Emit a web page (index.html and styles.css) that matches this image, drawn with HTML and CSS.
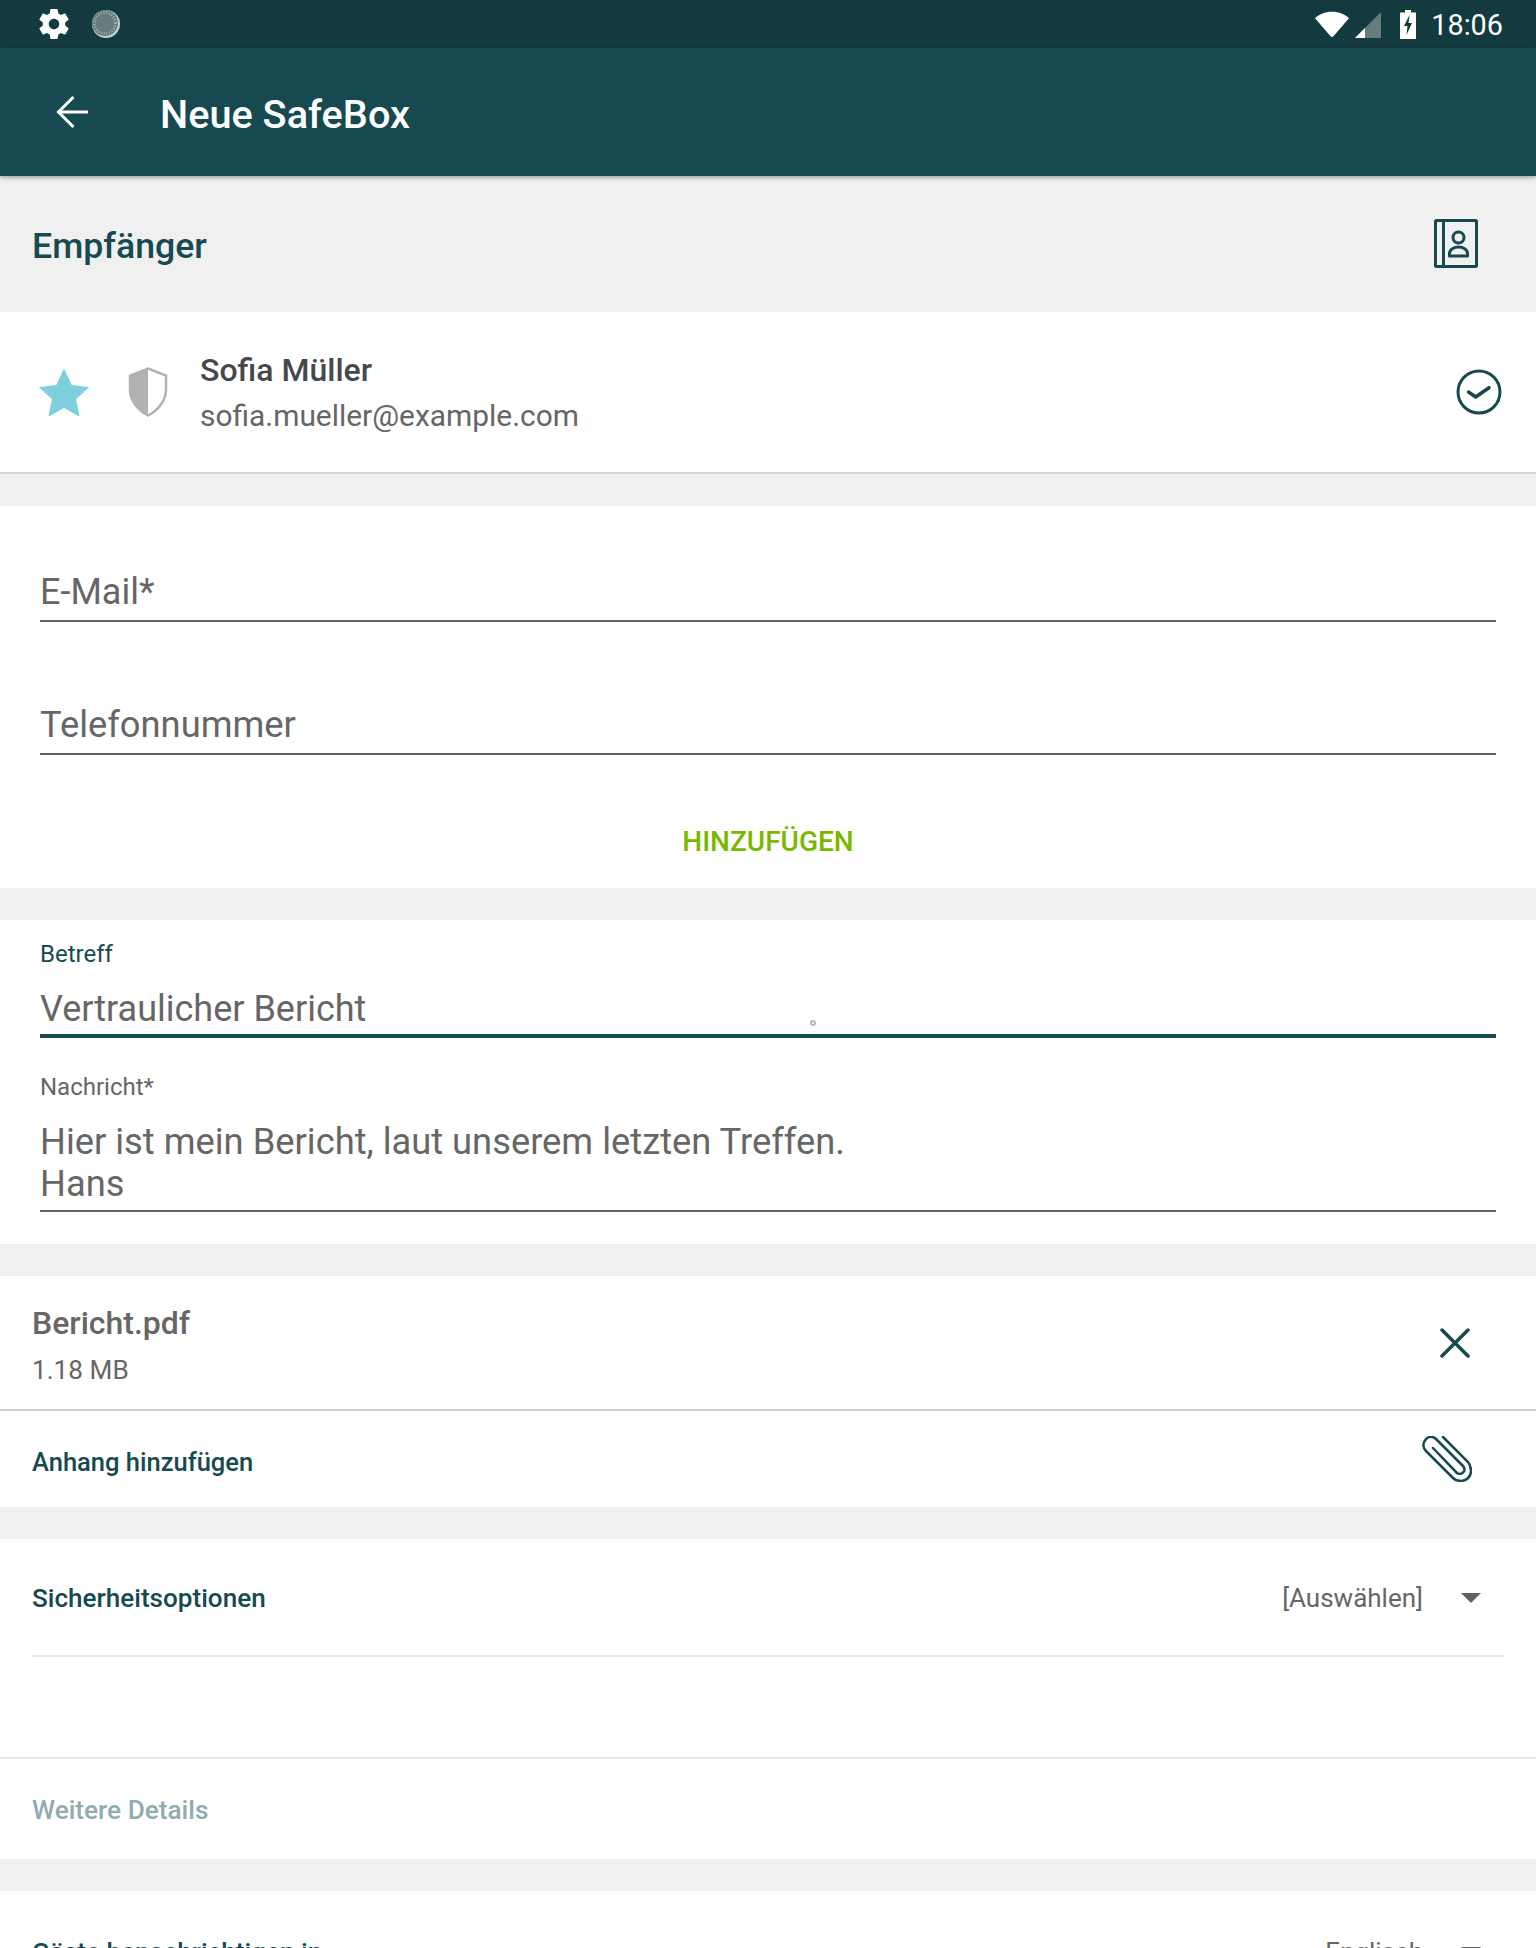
FILE: index.html
```html
<!DOCTYPE html>
<html lang="de">
<head>
    <meta charset="UTF-8">
    <meta name="viewport" content="width=device-width, initial-scale=1.0">
    <title>Neue SafeBox</title>
    <link rel="stylesheet" href="styles.css">
</head>
<body>
    <div class="status-bar">
        <svg class="icon-gear" viewBox="0 0 24 24"><path fill="#fff" d="M19.43 12.98c.04-.32.07-.64.07-.98s-.03-.66-.07-.98l2.11-1.65c.19-.15.24-.42.12-.64l-2-3.46c-.12-.22-.39-.3-.61-.22l-2.49 1c-.52-.4-1.08-.73-1.69-.98l-.38-2.65C14.46 2.18 14.25 2 14 2h-4c-.25 0-.46.18-.49.42l-.38 2.65c-.61.25-1.17.59-1.69.98l-2.49-1c-.23-.09-.49 0-.61.22l-2 3.46c-.13.22-.07.49.12.64l2.11 1.65c-.04.32-.07.65-.07.98s.03.66.07.98l-2.11 1.65c-.19.15-.24.42-.12.64l2 3.46c.12.22.39.3.61.22l2.49-1c.52.4 1.08.73 1.69.98l.38 2.65c.03.24.24.42.49.42h4c.25 0 .46-.18.49-.42l.38-2.65c.61-.25 1.17-.59 1.69-.98l2.49 1c.23.09.49 0 .61-.22l2-3.46c.12-.22.07-.49-.12-.64l-2.11-1.65zM12 15.5c-1.93 0-3.5-1.57-3.5-3.5s1.57-3.5 3.5-3.5 3.5 1.57 3.5 3.5-1.57 3.5-3.5 3.5z"/></svg>
        <svg class="icon-dial" viewBox="0 0 28 28">
            <circle cx="14" cy="14" r="14" fill="#c3d3d2"/>
            <circle cx="13" cy="13" r="13" fill="#667c7e"/>
            <circle cx="13" cy="13" r="10.5" fill="none" stroke="#a9b8b9" stroke-width="2.5" stroke-dasharray="1 1.8"/>
        </svg>
        <div class="status-right">
            <svg class="icon-wifi" viewBox="0 0 36 28"><path fill="#fff" d="M0 7.5C4.5 3 10.5 0.500 18 0.500S31.500 3 36 7.500L19.500 26.500c-.8.9-2.200.9-3 0z"/></svg>
            <svg class="icon-signal" viewBox="0 0 26 26">
                <path fill="#667c7e" d="M26 0v26H0z"/>
                <path fill="#fff" d="M10 16v10H0z"/>
            </svg>
            <svg class="icon-battery" viewBox="0 0 16 29"><path fill="#fff" d="M5 0h6v2.500h5V29H0V2.500h5z"/><path fill="#123a3f" d="M9.500 5 4 16h3.500l-1 9L12 13H8.500z"/></svg>
            <span class="clock">18:06</span>
        </div>
    </div>

    <header class="app-bar">
        <svg class="icon-back" viewBox="0 0 32 32"><path fill="none" stroke="#fff" stroke-width="3" d="M32 16H3M17.500 1 2.500 16l15 15"/></svg>
        <h1>Neue SafeBox</h1>
    </header>

    <div class="recipients-head">
        <h2>Empfänger</h2>
        <svg class="icon-contacts" viewBox="0 0 44 50" fill="none" stroke="#174a50" stroke-width="3">
            <rect x="1.500" y="1.500" width="41" height="46" rx="1"/>
            <path d="M9.500 1.500v46"/>
            <circle cx="24.500" cy="18.500" r="5.500"/>
            <path d="M15.500 37v-2.500c0-4 4.500-6.500 9-6.500s9 2.500 9 6.500V37z" stroke-linejoin="round"/>
        </svg>
    </div>

    <div class="recipient">
        <svg class="icon-star" viewBox="0 0 50 48"><path fill="#7fd0de" d="M25 0.500 32.500 16.500 49.500 18.500 36.500 30 40 47 25 38.500 10 47 13.500 30 0.500 18.500 17.500 16.500z" stroke="#7fd0de" stroke-linejoin="round"/></svg>
        <svg class="icon-shield" viewBox="0 0 40 50">
            <path fill="#fff" stroke="#b2b2b2" stroke-width="2.500" d="M20 1.500 38 8.500v14c0 11-8 21-18 26C10 43.500 2 33.500 2 22.500v-14z"/>
            <path fill="#b2b2b2" d="M20 1.500V48.500C10 43.500 2 33.500 2 22.500v-14z"/>
        </svg>
        <div class="recipient-text">
            <div class="recipient-name">Sofia Müller</div>
            <div class="recipient-mail">sofia.mueller@example.com</div>
        </div>
        <svg class="icon-check" viewBox="0 0 46 46" fill="none" stroke="#174a50" stroke-width="3">
            <circle cx="23" cy="23" r="21"/>
            <path d="M12.500 23l7.200 5 13.300-9.300" stroke-width="3.500" stroke-linecap="round" stroke-linejoin="round"/>
        </svg>
    </div>

    <section class="card add-guest">
        <div class="field field-email">E-Mail*</div>
        <div class="field field-phone">Telefonnummer</div>
        <div class="add-button">HINZUFÜGEN</div>
    </section>

    <section class="card message">
        <div class="field-label">Betreff</div>
        <div class="field field-subject">Vertraulicher Bericht<span class="cursor-dot"></span></div>
        <div class="field-label label-message">Nachricht*</div>
        <div class="field field-message">Hier ist mein Bericht, laut unserem letzten Treffen.<br>Hans</div>
    </section>

    <section class="card attachments">
        <div class="attachment">
            <div class="attachment-text">
                <div class="attachment-name">Bericht.pdf</div>
                <div class="attachment-size">1.18 MB</div>
            </div>
            <svg class="icon-close" viewBox="0 0 30 30"><path fill="none" stroke="#174a50" stroke-width="3.500" stroke-linecap="round" d="M2 2l26 26M28 2 2 28"/></svg>
        </div>
        <div class="attachment-add">
            <span class="row-title">Anhang hinzufügen</span>
            <svg class="icon-clip" viewBox="0 0 50 46" fill="none" stroke="#174a50" stroke-width="2.500" stroke-linecap="round">
                <path d="M21 1 46 26c2.500 3 3 7 3 9 0 6-5 10-10 10-3 0-6-1-8-3L4 15C1 12 0.500 7.500 3 4.500 6-.5 11 0 14 3l27 27c2 2 2 5 0 6.500-2 2-5 1.500-6.500 0L11 12"/>
            </svg>
        </div>
    </section>

    <section class="card options">
        <div class="select-row">
            <span class="row-title">Sicherheitsoptionen</span>
            <span class="select-value">[Auswählen]</span>
            <span class="caret"></span>
        </div>
        <div class="options-gap"></div>
        <div class="details-row">Weitere Details</div>
    </section>

    <section class="card guests">
        <div class="select-row guests-row">
            <span class="row-title">Gäste benachrichtigen in</span>
            <span class="select-value">Englisch</span>
            <span class="caret"></span>
        </div>
    </section>
</body>
</html>
```

FILE: styles.css
```css
html, body {
    margin: 0;
    height: 1948px;
    overflow: hidden;
}
body {
    display: flex;
    flex-direction: column;
    background-color: #f0f0f0;
    font-family: Roboto, "Noto Sans", sans-serif;
    color: #666;
}
body > * {
    flex-shrink: 0;
}
h1, h2 {
    margin: 0;
}
svg {
    flex-shrink: 0;
    display: block;
}

/* status bar */
.status-bar {
    display: flex;
    align-items: center;
    height: 48px;
    padding: 0 33px 0 39px;
    background-color: #123a3f;
}
.icon-gear {
    width: 36px;
    height: 36px;
    margin-left: -3px;
}
.icon-dial {
    width: 28px;
    height: 28px;
    margin-left: 20px;
}
.status-right {
    display: flex;
    align-items: center;
    margin-left: auto;
}
.icon-wifi {
    width: 34px;
    height: 27px;
}
.icon-signal {
    width: 26px;
    height: 26px;
    margin: 2px 0 0 6px;
}
.icon-battery {
    width: 16px;
    height: 29px;
    margin-left: 19px;
}
.clock {
    margin: 2px 0 0 15px;
    font-size: 28.8px;
    color: #fff;
}

/* app bar */
.app-bar {
    position: relative;
    z-index: 1;
    display: flex;
    align-items: center;
    height: 128px;
    padding-left: 56px;
    background-color: #174a50;
    box-shadow: 0 2px 4px rgba(0, 0, 0, 0.3);
}
.icon-back {
    width: 32px;
    height: 32px;
    margin-bottom: 1px;
}
.app-bar h1 {
    margin: 5px 0 0 72px;
    font-size: 39.7px;
    font-weight: 500;
    color: #fff;
}

/* recipients */
.recipients-head {
    display: flex;
    align-items: center;
    justify-content: space-between;
    height: 136px;
    padding: 0 58px 0 32px;
}
.recipients-head h2 {
    margin-top: 3px;
    font-size: 35.7px;
    font-weight: 500;
    color: #174a50;
}
.icon-contacts {
    width: 44px;
    height: 50px;
}
.recipient {
    display: flex;
    align-items: center;
    height: 160px;
    padding: 0 34px 0 39px;
    border-bottom: 2px solid #d6d6d6;
    background-color: #fff;
}
.icon-star {
    width: 50px;
    height: 48px;
    margin-top: 2px;
}
.icon-shield {
    width: 40px;
    height: 50px;
    margin-left: 39px;
}
.recipient-text {
    margin: 3px 0 0 32px;
    flex-grow: 1;
}
.recipient-name {
    font-size: 32px;
    font-weight: 500;
    line-height: 44px;
    color: #46484c;
}
.recipient-mail {
    font-size: 29.9px;
    line-height: 47px;
}
.icon-check {
    width: 46px;
    height: 46px;
}

/* form cards */
.card {
    display: flex;
    flex-direction: column;
    margin-top: 32px;
    background-color: #fff;
}
.add-guest {
    height: 382px;
}
.message {
    height: 324px;
}
.field {
    margin: 0 40px;
    font-size: 36px;
    line-height: 42px;
    border-bottom: 2px solid #616161;
}
.field-email {
    margin-top: 65px;
    padding-bottom: 7px;
}
.field-phone {
    margin-top: 82px;
    padding-bottom: 7px;
    font-size: 36.3px;
}
.add-button {
    margin-top: 70px;
    font-size: 28px;
    font-weight: 500;
    text-align: center;
    color: #7ab800;
}
.field-label {
    margin: 20px 40px 0;
    font-size: 24px;
    line-height: 28px;
}
.message .field-label:first-child {
    color: #174a50;
}
.field-subject {
    position: relative;
    margin-top: 20px;
    padding-bottom: 4px;
    border-bottom: 4px solid #174a50;
}
.cursor-dot {
    position: absolute;
    left: 770px;
    bottom: 8px;
    width: 6px;
    height: 6px;
    border: 2px solid #b8b8b8;
    border-radius: 50%;
    box-sizing: border-box;
}
.label-message {
    margin-top: 35px;
}
.field-message {
    margin-top: 20px;
    padding-bottom: 5px;
    font-size: 36.3px;
}

/* attachments */
.attachment {
    display: flex;
    align-items: center;
    justify-content: space-between;
    height: 133px;
    padding: 0 66px 0 32px;
    border-bottom: 2px solid #cfcfcf;
}
.attachment-text {
    padding-top: 6px;
}
.attachment-name {
    font-size: 32px;
    font-weight: 500;
    line-height: 46px;
}
.attachment-size {
    margin-top: 2px;
    font-size: 26.2px;
    line-height: 44px;
}
.icon-close {
    width: 30px;
    height: 30px;
}
.attachment-add {
    display: flex;
    align-items: center;
    justify-content: space-between;
    height: 90px;
    padding: 6px 64px 0 32px;
}
.row-title {
    font-size: 26px;
    font-weight: 500;
    color: #174a50;
}
.attachment-add .row-title {
    font-size: 25.5px;
}
.icon-clip {
    width: 50px;
    height: 46px;
    margin-bottom: 7px;
}

/* options */
.select-row {
    display: flex;
    align-items: center;
    height: 114px;
    padding-top: 2px;
    margin: 0 32px;
    border-bottom: 2px solid #e8e8e8;
}
.select-row .row-title {
    flex-grow: 1;
    font-size: 26.1px;
}
.select-value {
    font-size: 26px;
}
.caret {
    width: 0;
    height: 0;
    margin: 0 23px 0 38px;
    border-left: 10px solid transparent;
    border-right: 10px solid transparent;
    border-top: 10px solid #616161;
}
.options-gap {
    height: 100px;
    border-bottom: 2px solid #e8e8e8;
}
.details-row {
    display: flex;
    align-items: center;
    height: 98px;
    padding: 2px 0 0 32px;
    font-size: 26.2px;
    font-weight: 500;
    color: #8fadaf;
}
.guests-row {
    height: 118px;
    border-bottom: none;
}
```
